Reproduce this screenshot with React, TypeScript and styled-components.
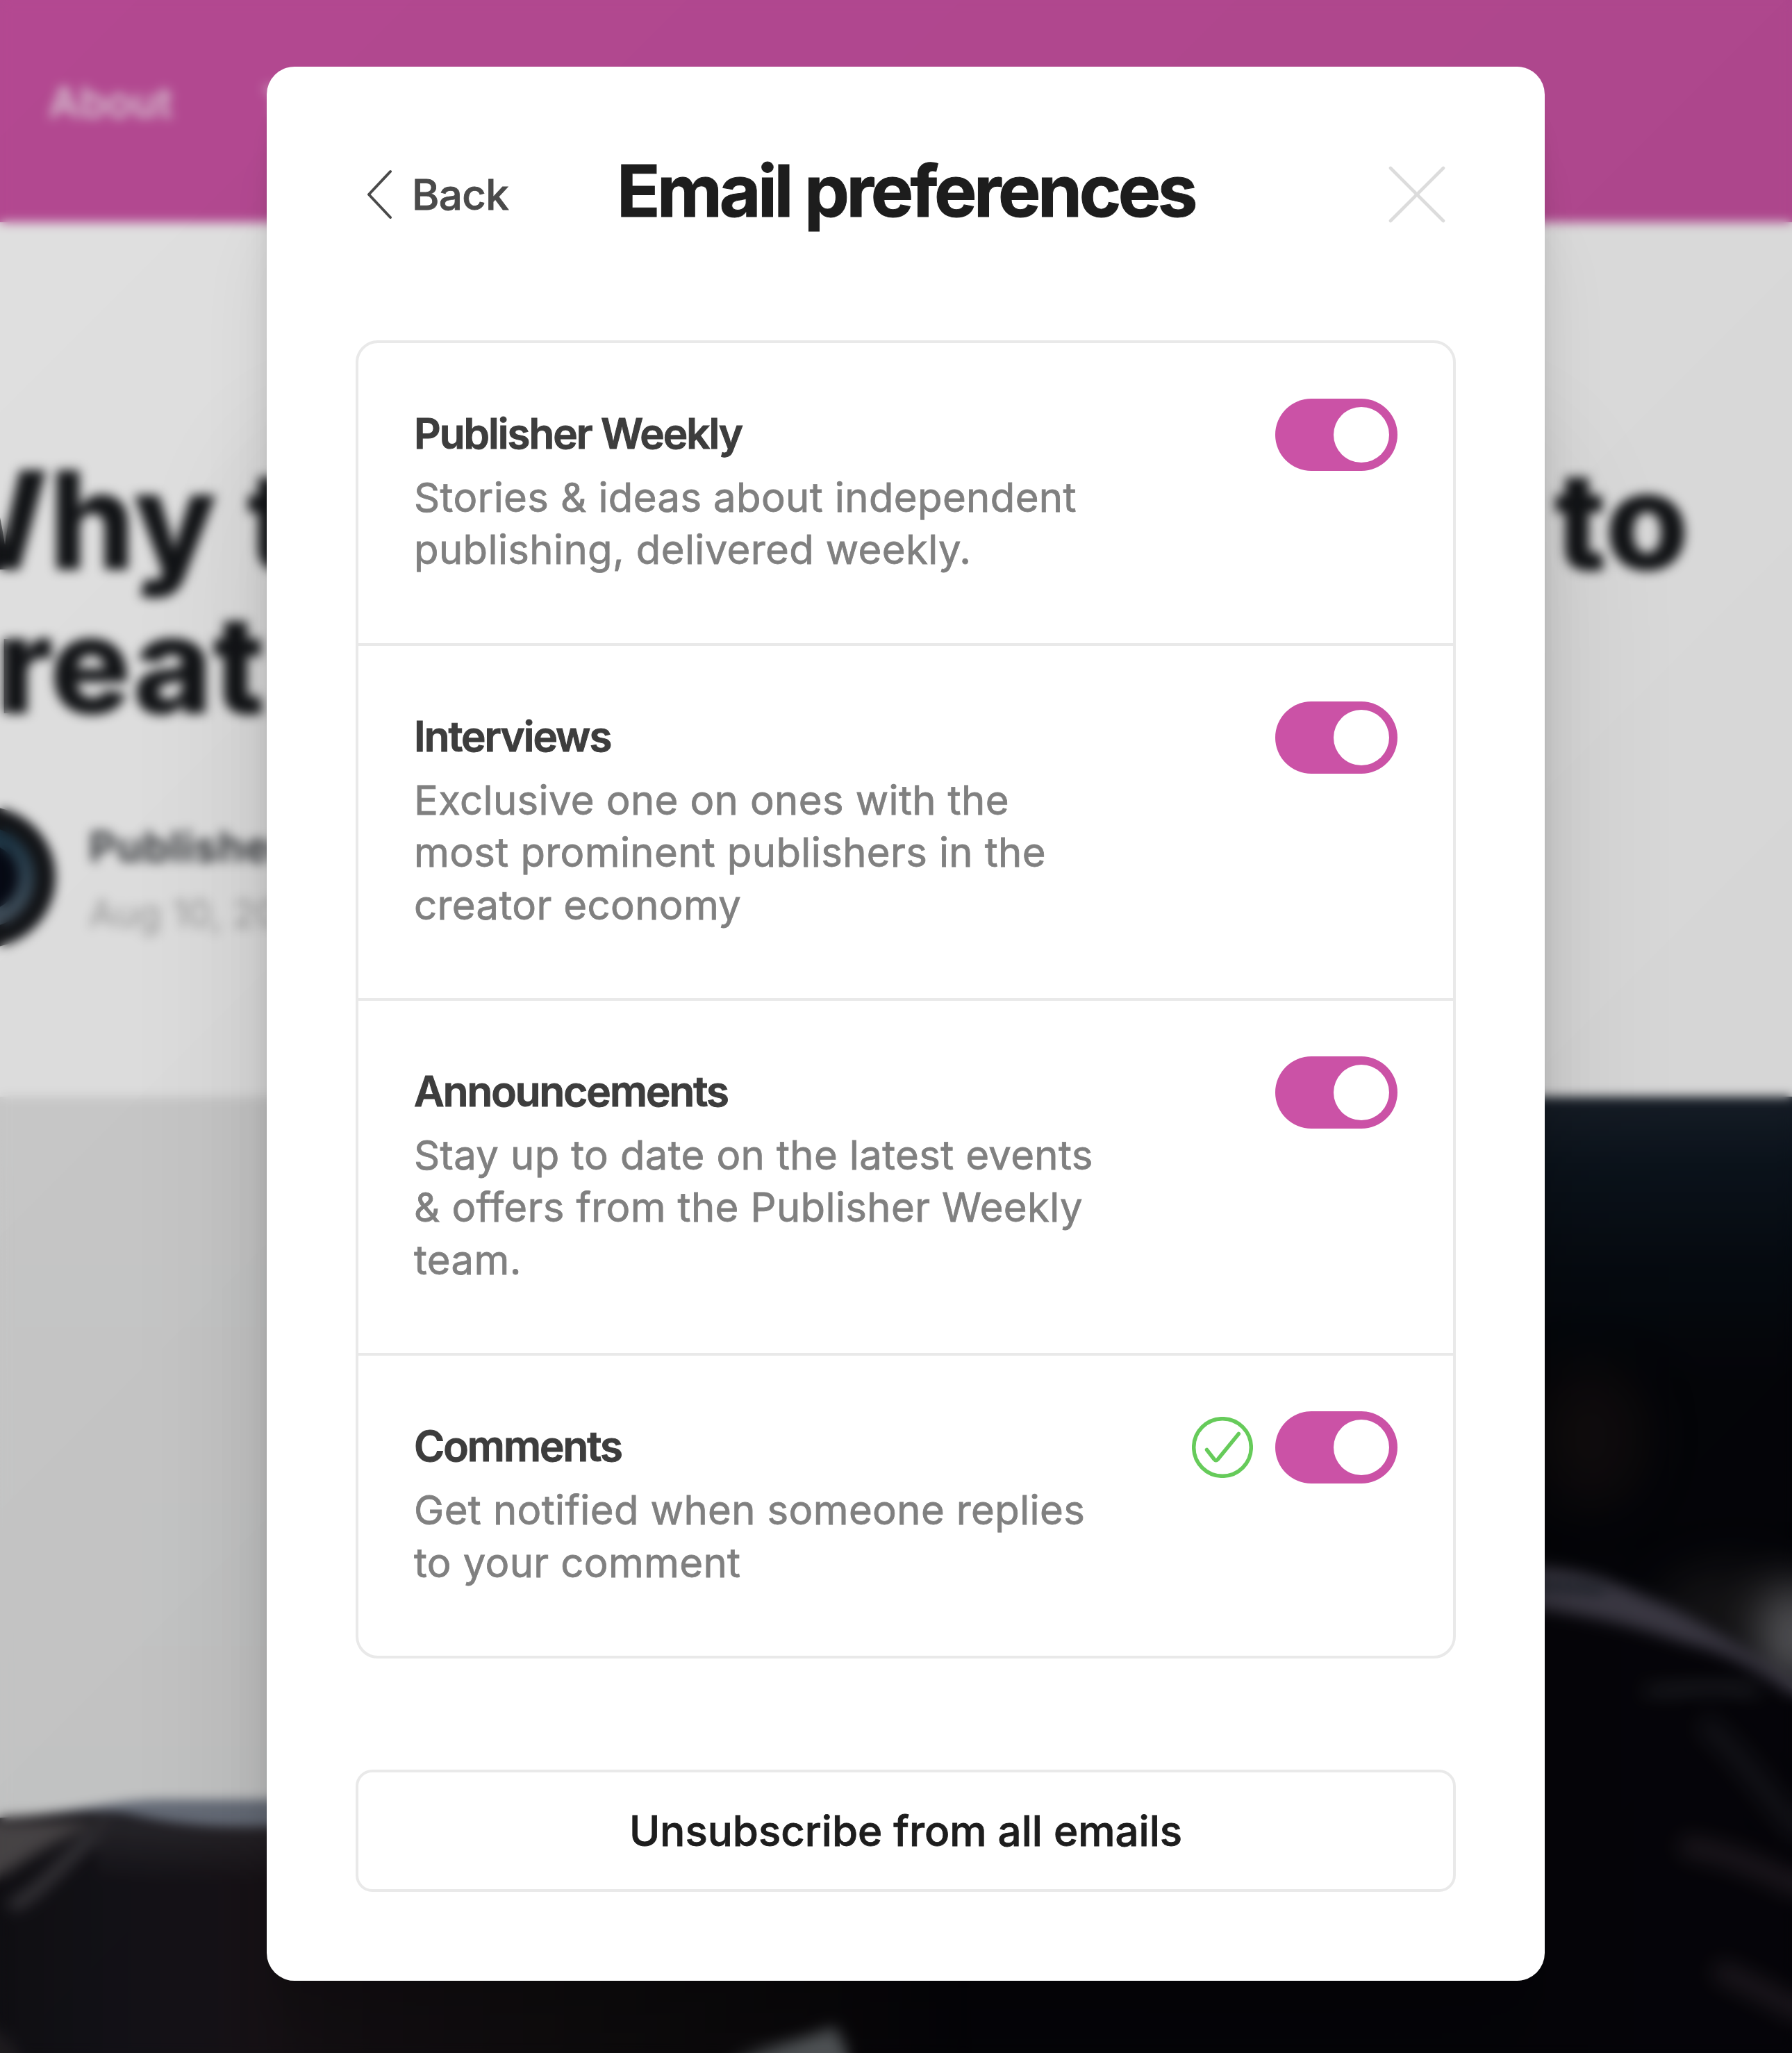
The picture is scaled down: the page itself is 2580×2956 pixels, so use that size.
import React, { useState } from "react";
import styled, { createGlobalStyle } from "styled-components";

const GlobalStyle = createGlobalStyle`
  * { box-sizing: border-box; }
  html, body { margin: 0; padding: 0; overflow: hidden; }
  body {
    font-family: Inter, "Liberation Sans", sans-serif;
    -webkit-font-smoothing: antialiased;
  }
  button { font: inherit; border: 0; background: none; padding: 0; margin: 0; }
  h1, h2, h3, p { margin: 0; }
`;

const Screen = styled.div`
  position: relative;
  width: 2580px;
  height: 2956px;
  overflow: hidden;
  background: #fff;
`;

/* ---------- Page behind the popup ---------- */

const Page = styled.div`
  display: flex;
  flex-direction: column;
  width: 2580px;
  height: 2956px;
`;

const SiteNav = styled.nav`
  display: flex;
  gap: 130px;
  flex: none;
  height: 320px;
  padding: 105px 0 0 70px;
  background: #cc53a5;
  color: rgba(255, 255, 255, 0.8);
  font-size: 61px;
  font-weight: 600;
  line-height: 84px;
`;

const Article = styled.header`
  display: flex;
  flex-direction: column;
  flex: none;
  height: 1259px;
  padding-top: 325px;
`;

const HeadlineRow = styled.div<{ $outdent: number }>`
  display: flex;
  justify-content: space-between;
  height: 207px;
  margin-left: -${(p) => p.$outdent}px;
  padding-right: 148px;
  color: #15171a;
  font-size: 196px;
  font-weight: 800;
  line-height: 207px;
  white-space: nowrap;
`;

const Byline = styled.div`
  display: flex;
  align-items: center;
  gap: 48px;
  margin: 102px 0 0 -124px;
  height: 204px;
`;

const Avatar = styled.div`
  flex: none;
  width: 204px;
  height: 204px;
  border: 30px solid #16181c;
  border-radius: 50%;
  background: linear-gradient(#1c384a, #4d5b68);
  padding: 24px;
`;

const AvatarCore = styled.div`
  height: 100%;
  border-radius: 50%;
  background: #080c18;
`;

const BylineText = styled.div`
  padding-top: 8px;
`;

const Author = styled.div`
  color: #3f4246;
  font-size: 60px;
  font-weight: 700;
  line-height: 96px;
  letter-spacing: 1px;
`;

const PostDate = styled.div`
  color: #adadad;
  font-size: 55px;
  line-height: 96px;
`;

const Photo = styled.svg`
  display: block;
  flex: none;
`;

/* ---------- Popup ---------- */

const Backdrop = styled.div`
  position: absolute;
  inset: 0;
  display: flex;
  justify-content: center;
  align-items: flex-start;
  padding: 96px 0 0 28px;
  background: linear-gradient(315deg, rgba(0, 0, 0, 0.175) 0%, rgba(0, 0, 0, 0.122) 100%);
  backdrop-filter: blur(8px);
`;

const Popup = styled.section`
  width: 1840px;
  height: 2756px;
  padding: 128px;
  border-radius: 40px;
  background: #fff;
  box-shadow:
    0 15px 9px rgba(0, 0, 0, 0.028),
    0 37px 21px rgba(0, 0, 0, 0.04),
    0 69px 40px rgba(0, 0, 0, 0.05),
    0 123px 72px rgba(0, 0, 0, 0.06),
    0 231px 134px rgba(0, 0, 0, 0.072),
    0 552px 320px rgba(0, 0, 0, 0.1);
`;

const PopupHeader = styled.header`
  display: grid;
  grid-template-columns: 1fr auto 1fr;
  grid-template-rows: 112px;
  align-items: center;
  margin-bottom: 154px;
`;

const BackButton = styled.button`
  display: flex;
  align-items: center;
  gap: 27px;
  padding-left: 14px;
  color: #4a4a4a;
  font-size: 60px;
  font-weight: 500;
  line-height: 80px;
  letter-spacing: -0.6px;
  -webkit-text-stroke: 0.8px currentColor;
`;

const PopupTitle = styled.h1`
  align-self: start;
  color: #1d1d1d;
  font-size: 103px;
  font-weight: 700;
  line-height: 101px;
  letter-spacing: -4.4px;
  white-space: nowrap;
  -webkit-text-stroke: 1px currentColor;
`;

const CloseButton = styled.button`
  justify-self: end;
  display: flex;
  padding-right: 14px;
`;

const Newsletters = styled.ul`
  margin: 0;
  padding: 0;
  height: 1898px;
  list-style: none;
  border: 4px solid #e9e9e9;
  border-radius: 32px;
`;

const NewsletterRow = styled.li`
  display: flex;
  justify-content: space-between;
  align-items: flex-start;
  padding: 80px 80px 96px;
  & + & { border-top: 4px solid #e9e9e9; }
`;

const NewsletterName = styled.h3`
  margin-bottom: 5px;
  color: #3d3d3d;
  font-size: 60px;
  font-weight: 600;
  line-height: 100px;
  letter-spacing: -1.95px;
  -webkit-text-stroke: 1px currentColor;
`;

const NewsletterText = styled.p`
  color: #808080;
  font-size: 58px;
  line-height: 75.4px;
  letter-spacing: 0.38px;
  white-space: pre-line;
  -webkit-text-stroke: 0.8px currentColor;
`;

const Controls = styled.div`
  display: flex;
  align-items: center;
  gap: 32px;
`;

const Switch = styled.button<{ $on: boolean }>`
  display: flex;
  justify-content: ${(p) => (p.$on ? "flex-end" : "flex-start")};
  width: 176px;
  height: 104px;
  padding: 12px;
  border-radius: 52px;
  background: ${(p) => (p.$on ? "#cb52a6" : "#e5e5e5")};
`;

const Knob = styled.span`
  width: 80px;
  height: 80px;
  border-radius: 50%;
  background: #fff;
`;

const UnsubscribeButton = styled.button`
  display: block;
  width: 100%;
  height: 176px;
  margin-top: 160px;
  border: 4px solid #e9e9e9;
  border-radius: 24px;
  color: #1d1d1d;
  font-size: 60px;
  font-weight: 500;
  -webkit-text-stroke: 0.8px currentColor;
`;

const ChevronIcon = () => (
  <svg width="40" height="72" viewBox="0 0 40 72" fill="none" stroke="#4a4a4a" strokeWidth="4">
    <path d="M36 3 L5 36 L36 69" strokeLinejoin="round" strokeLinecap="round" />
  </svg>
);

const CloseIcon = () => (
  <svg width="84" height="84" viewBox="0 0 84 84" fill="none" stroke="#dcdcdc" strokeWidth="4.6">
    <path d="M4 4 L80 80 M80 4 L4 80" strokeLinecap="round" />
  </svg>
);

const SavedIcon = () => (
  <svg width="88" height="88" viewBox="0 0 88 88" fill="none" stroke="#66cb5a" strokeWidth="5.5">
    <circle cx="44" cy="44" r="41.3" />
    <path
      d="M21.5 47.5 L32 61 Q34.5 64.5 37.5 61 L67.3 24.5"
      strokeLinecap="round"
      strokeLinejoin="round"
    />
  </svg>
);

const CoverPhoto = () => (
  <Photo width="2580" height="1377" viewBox="0 0 2580 1377">
    <defs>
      <linearGradient id="wall" x1="0" y1="0" x2="0" y2="1">
        <stop offset="0" stopColor="#e6e6e6" />
        <stop offset="1" stopColor="#e2e3e3" />
      </linearGradient>
      <linearGradient id="night" x1="0" y1="0" x2="0" y2="1">
        <stop offset="0" stopColor="#1a222d" />
        <stop offset="0.07" stopColor="#0d1620" />
        <stop offset="0.18" stopColor="#070c13" />
        <stop offset="0.3" stopColor="#05060a" />
        <stop offset="1" stopColor="#06050a" />
      </linearGradient>
      <linearGradient id="coat" x1="0" y1="0" x2="1400" y2="0" gradientUnits="userSpaceOnUse">
        <stop offset="0" stopColor="#121116" />
        <stop offset="0.15" stopColor="#17151b" />
        <stop offset="0.27" stopColor="#1b151a" />
        <stop offset="0.6" stopColor="#131012" />
        <stop offset="0.85" stopColor="#0c0a0d" />
        <stop offset="1" stopColor="#06050a" />
      </linearGradient>
      <linearGradient id="coatSheen" x1="0" y1="0" x2="0" y2="1">
        <stop offset="0" stopColor="#3a383d" />
        <stop offset="1" stopColor="#3a383d" stopOpacity="0" />
      </linearGradient>
      <filter id="soft" x="-50%" y="-50%" width="200%" height="200%" colorInterpolationFilters="sRGB">
        <feGaussianBlur stdDeviation="8" />
      </filter>
      <filter id="fold" x="-60%" y="-100%" width="220%" height="300%" colorInterpolationFilters="sRGB">
        <feGaussianBlur stdDeviation="14" />
      </filter>
      <filter id="haze" x="-100%" y="-100%" width="300%" height="300%" colorInterpolationFilters="sRGB">
        <feGaussianBlur stdDeviation="32" />
      </filter>
    </defs>
    <rect width="2580" height="1377" fill="url(#wall)" />
    <rect x="1300" width="1280" height="1377" fill="url(#night)" />

    <path d="M-40 1042 C80 1038 150 1012 230 1012 H600 V1200 H-40Z" fill="#767d8b" />
    <path
      d="M-40 1040 C60 1038 120 1022 190 1034 C250 1048 320 1054 400 1050 H1400 V1400 H-40Z"
      fill="url(#coat)"
    />
    <path d="M140 1034 C240 1048 320 1054 400 1050 V1130 H140Z" fill="url(#coatSheen)" opacity="0.7" />
    <path d="M-40 1042 H160 C90 1064 50 1090 -40 1150Z" fill="#534f51" filter="url(#soft)" />
    <path
      d="M15 1166 C60 1146 90 1100 140 1060"
      fill="none"
      stroke="#434146"
      strokeWidth="18"
      filter="url(#soft)"
    />
    <path d="M-40 1300 L50 1400 H-40Z" fill="#2c282b" filter="url(#soft)" opacity="0.7" />
    <path d="M1020 1400 C1080 1370 1140 1365 1202 1338 L1232 1400Z" fill="#72777b" filter="url(#soft)" />

    <ellipse cx="2290" cy="490" rx="80" ry="100" fill="#120e10" filter="url(#haze)" />
    <ellipse cx="2500" cy="740" rx="110" ry="60" fill="#19181a" filter="url(#haze)" />
    <ellipse cx="2584" cy="780" rx="52" ry="76" fill="#66666a" filter="url(#haze)" />
    <path
      d="M1400 700 H2224 C2300 690 2380 740 2460 775 S2560 846 2620 880 V1420 H1400Z"
      fill="#07060b"
    />
    <path
      d="M2160 676 C2290 674 2330 704 2380 724 S2540 810 2620 868 V892 C2540 830 2500 806 2440 790 S2340 752 2160 730Z"
      fill="#464350"
      filter="url(#soft)"
    />
    <path
      d="M2180 702 C2230 700 2270 704 2310 714"
      fill="none"
      stroke="#262b34"
      strokeWidth="16"
      filter="url(#soft)"
    />
    <path
      d="M2370 858 C2440 852 2480 838 2530 860"
      fill="none"
      stroke="#232429"
      strokeWidth="20"
      filter="url(#fold)"
    />
    <path
      d="M2450 900 C2500 940 2540 1000 2600 1070"
      fill="none"
      stroke="#17171d"
      strokeWidth="30"
      filter="url(#fold)"
    />
    <path
      d="M2420 1078 C2500 1090 2540 1115 2640 1160 M2470 1256 C2520 1276 2560 1302 2640 1342"
      fill="none"
      stroke="#251f26"
      strokeWidth="28"
      filter="url(#fold)"
    />
  </Photo>
);

const newsletters = [
  {
    name: "Publisher Weekly",
    text: "Stories & ideas about independent\npublishing, delivered weekly.",
  },
  {
    name: "Interviews",
    text: "Exclusive one on ones with the\nmost prominent publishers in the\ncreator economy",
  },
  {
    name: "Announcements",
    text: "Stay up to date on the latest events\n& offers from the Publisher Weekly\nteam.",
  },
  {
    name: "Comments",
    text: "Get notified when someone replies\nto your comment",
    saved: true,
  },
];

export default function App() {
  const [enabled, setEnabled] = useState(newsletters.map(() => true));
  const toggle = (index: number) =>
    setEnabled((list) => list.map((on, i) => (i === index ? !on : on)));

  return (
    <>
      <GlobalStyle />
      <Screen>
        <Page>
          <SiteNav>
            <span>About</span>
            <span>T</span>
          </SiteNav>
          <Article>
            <HeadlineRow $outdent={137}>
              <span>Why t</span>
              <span>to</span>
            </HeadlineRow>
            <HeadlineRow $outdent={122}>
              <span>creat</span>
            </HeadlineRow>
            <Byline>
              <Avatar>
                <AvatarCore />
              </Avatar>
              <BylineText>
                <Author>Publisher</Author>
                <PostDate>Aug 10, 20</PostDate>
              </BylineText>
            </Byline>
          </Article>
          <CoverPhoto />
        </Page>

        <Backdrop>
          <Popup>
            <PopupHeader>
              <BackButton>
                <ChevronIcon />
                Back
              </BackButton>
              <PopupTitle>Email preferences</PopupTitle>
              <CloseButton aria-label="Close">
                <CloseIcon />
              </CloseButton>
            </PopupHeader>

            <Newsletters>
              {newsletters.map((item, index) => (
                <NewsletterRow key={item.name}>
                  <div>
                    <NewsletterName>{item.name}</NewsletterName>
                    <NewsletterText>{item.text}</NewsletterText>
                  </div>
                  <Controls>
                    {item.saved && <SavedIcon />}
                    <Switch
                      $on={enabled[index]}
                      aria-pressed={enabled[index]}
                      aria-label={item.name}
                      onClick={() => toggle(index)}
                    >
                      <Knob />
                    </Switch>
                  </Controls>
                </NewsletterRow>
              ))}
            </Newsletters>

            <UnsubscribeButton>Unsubscribe from all emails</UnsubscribeButton>
          </Popup>
        </Backdrop>
      </Screen>
    </>
  );
}
